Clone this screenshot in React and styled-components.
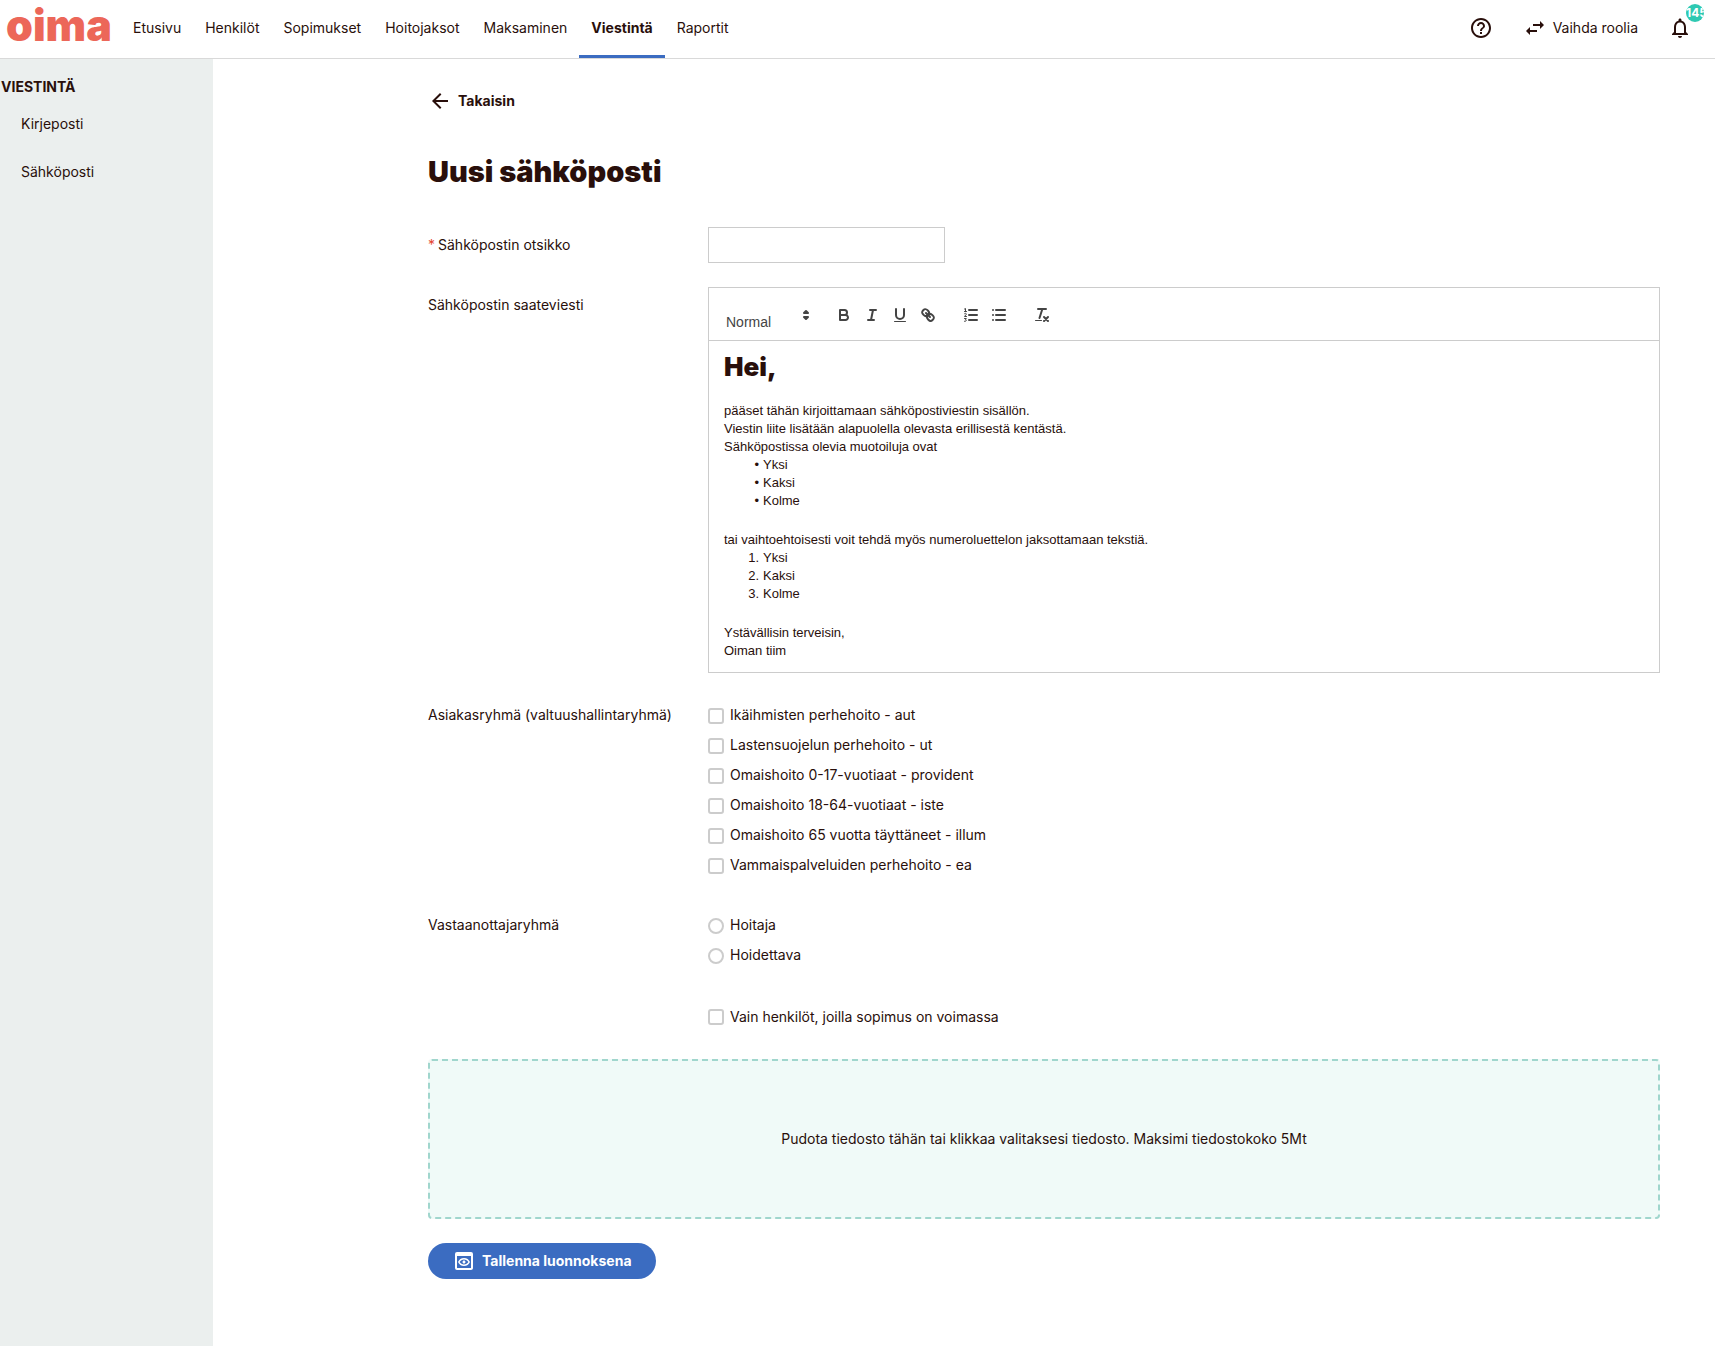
import { useState } from 'react'
import styled, { createGlobalStyle, css } from 'styled-components'
import {
  MdArrowBack,
  MdHelpOutline,
  MdNotificationsNone,
  MdOutlinePreview,
  MdSwapHoriz,
} from 'react-icons/md'

const GlobalStyle = createGlobalStyle`
  *, *::before, *::after {
    box-sizing: border-box;
  }

  body {
    margin: 0;
    background: #fff;
    color: #290f0b;
    font-family: Inter, sans-serif;
    font-size: 14px;
    line-height: 20px;
  }

  button, input, select {
    font: inherit;
    color: inherit;
  }
`;

const Page = styled.div`
  display: flex;
  flex-direction: column;
  min-height: 100vh;
`;

const Header = styled.header`
  display: flex;
  align-items: stretch;
  height: 59px;
  padding: 0 23px 0 6px;
  border-bottom: 1px solid #d9d9d9;
`;

const Logo = styled.a`
  width: 115px;
  color: #ec6759;
  text-decoration: none;

  svg {
    display: block;
    overflow: visible;
  }
`;

const Nav = styled.nav`
  display: flex;
`;

const NavLink = styled.a`
  display: flex;
  align-items: center;
  padding: 0 12px;
  border-top: 1px solid transparent;
  border-bottom: 3px solid ${({ $active }) => ($active ? '#3b6cc1' : 'transparent')};
  color: inherit;
  font-weight: ${({ $active }) => ($active ? 700 : 400)};
  text-decoration: none;
`;

const Actions = styled.div`
  display: flex;
  align-items: center;
  gap: 30px;
  height: 56px;
  margin-left: auto;
`;

const PlainButton = styled.button`
  display: flex;
  align-items: center;
  gap: 6px;
  padding: 0;
  border: none;
  background: transparent;
  cursor: pointer;
  position: relative;

  svg {
    flex: none;
  }
`;

const Badge = styled.span`
  position: absolute;
  top: -12px;
  right: -12px;
  width: 18px;
  height: 18px;
  border-radius: 50%;
  background: #2ec9b2;
  color: #fff;
  font-size: 12px;
  font-weight: 700;
  line-height: 18px;
  text-align: left;
  overflow: hidden;
`;

const Body = styled.div`
  display: flex;
  flex: 1;
`;

const Sidebar = styled.aside`
  flex: none;
  width: 213px;
  padding-top: 18px;
  background: #ebefee;
`;

const SidebarTitle = styled.h2`
  margin: 0 0 3px;
  padding-left: 1px;
  font-size: 14px;
  font-weight: 700;
  line-height: 20px;
  text-transform: uppercase;
`;

const SidebarLink = styled.a`
  display: block;
  padding: 14px 21px;
  color: inherit;
  text-decoration: none;
`;

const Main = styled.main`
  flex: 1;
  min-width: 0;
  padding: 30px 55px 40px 215px;
`;

const BackButton = styled(PlainButton)`
  font-weight: 700;
`;

const Title = styled.h1`
  margin: 38px 0 34px;
  font-size: 29px;
  font-weight: 900;
  line-height: 42px;
`;

const Form = styled.form`
  display: flex;
  flex-direction: column;
  gap: 24px;
`;

const Row = styled.div`
  display: grid;
  grid-template-columns: 280px minmax(0, 1fr);
`;

const ContractRow = styled(Row)`
  padding-top: 2px;

  input {
    margin-top: 0;
  }
`;

const labelStyles = css`
  padding: 8px 0;
  line-height: 20px;
`;

const Label = styled.label`
  ${labelStyles}
`;

const LabelText = styled.div`
  ${labelStyles}
`;

const Required = styled.span`
  margin-right: 3px;
  color: #e5452f;
`;

const TextInput = styled.input`
  width: 237px;
  height: 36px;
  padding: 0 12px;
  border: 1px solid #ccc;
  outline: none;
`;

const Editor = styled.div`
  border: 1px solid #ccc;
`;

const Toolbar = styled.div`
  display: flex;
  align-items: center;
  height: 53px;
  padding: 2px 8px 0;
  border-bottom: 1px solid #ccc;
  color: #444;
  font-family: 'Liberation Sans', sans-serif;
`;

const ToolGroup = styled.div`
  display: flex;
  align-items: center;
  margin-right: 15px;
`;

const Picker = styled.label`
  display: flex;
  align-items: center;
  width: 98px;

  svg {
    flex: none;
    width: 18px;
    pointer-events: none;
  }
`;

const PickerSelect = styled.select`
  flex: 1;
  min-width: 0;
  height: 38px;
  padding: 14px 0 0 9px;
  border: none;
  outline: none;
  background: transparent;
  font-size: 14px;
  appearance: none;
`;

const ToolButton = styled.button`
  width: 28px;
  height: 24px;
  padding: 3px 5px;
  border: none;
  background: none;
  cursor: pointer;

  svg {
    display: block;
    width: 18px;
    height: 18px;
  }
`;

const EditorContent = styled.div`
  padding: 8px 15px 12px;
  font-family: 'Liberation Sans', sans-serif;
  font-size: 13px;
  line-height: 18px;
  outline: none;

  h2 {
    margin: 0 0 17px;
    font-family: Inter, sans-serif;
    font-size: 26px;
    font-weight: 900;
    line-height: 36px;
  }

  p {
    margin: 0;
  }

  ul, ol {
    margin: 0 0 21px;
    padding: 0;
    list-style: none;
    counter-reset: item;
  }

  li {
    counter-increment: item;
  }

  li::before {
    display: inline-block;
    width: 35px;
    margin-right: 4px;
    text-align: right;
    content: '•';
  }

  ol li::before {
    content: counter(item) '.';
  }
`;

const Options = styled.div`
  display: flex;
  flex-direction: column;
  gap: 10px;
  padding: 8px 0;
`;

const Option = styled.label`
  display: flex;
  align-items: center;
  gap: 6px;
  line-height: 20px;
  cursor: pointer;
`;

const Check = styled.input`
  flex: none;
  width: 16px;
  height: 16px;
  margin: 2px 0 0;
  border: 2px solid #ccc;
  border-radius: ${({ type }) => (type === 'radio' ? '50%' : '3px')};
  background: #fff;
  appearance: none;

  &:checked {
    background: #3b6cc1;
    box-shadow: inset 0 0 0 2px #fff;
  }
`;

const DropZone = styled.label`
  display: flex;
  align-items: center;
  justify-content: center;
  height: 160px;
  border: 2px dashed #a0d6cd;
  border-radius: 4px;
  background: #f0faf8;
  cursor: pointer;
`;

const FileInput = styled.input`
  position: absolute;
  width: 1px;
  height: 1px;
  opacity: 0;
`;

const SaveButton = styled.button`
  display: flex;
  align-items: center;
  align-self: flex-start;
  gap: 6px;
  height: 36px;
  padding: 0 24px;
  border: none;
  border-radius: 18px;
  background: #3b6cc1;
  color: #fff;
  font-weight: 700;
  cursor: pointer;
`;

const ToolIcon = ({ children }) => (
  <svg viewBox='0 0 18 18' fill='none' stroke='#444' strokeWidth='2' strokeLinecap='round' strokeLinejoin='round'>
    {children}
  </svg>
)

const textTools = [
  {
    name: 'Lihavointi',
    icon: <>
      <path d='M5 4H9.5A2.5 2.5 0 0 1 12 6.5A2.5 2.5 0 0 1 9.5 9H5Z' />
      <path d='M5 9H10.5A2.5 2.5 0 0 1 13 11.5A2.5 2.5 0 0 1 10.5 14H5Z' />
    </>,
  },
  {
    name: 'Kursivointi',
    icon: <path d='M7 4H13M5 14H11M8 14L10 4' />,
  },
  {
    name: 'Alleviivaus',
    icon: <>
      <path d='M5 3V9A4 4 0 0 0 9 13A4 4 0 0 0 13 9V3' />
      <rect x='3' y='15' width='12' height='1' rx='0.5' fill='#444' stroke='none' />
    </>,
  },
  {
    name: 'Linkki',
    icon: <>
      <path d='M7 7L11 11' />
      <path d='M8.9 4.577a3.476 3.476 0 0 1 .36 4.679A3.476 3.476 0 0 1 4.577 8.9C3.185 7.5 2.035 6.4 4.217 4.217S7.5 3.185 8.9 4.577Z' />
      <path d='M13.423 9.1a3.476 3.476 0 0 0-4.679-.36 3.476 3.476 0 0 0 .36 4.679c1.392 1.392 2.5 2.542 4.679.36S14.815 10.5 13.423 9.1Z' />
    </>,
  },
]

const listTools = [
  {
    name: 'Numeroitu luettelo',
    icon: <>
      <path d='M7 4H15M7 9H15M7 14H15' />
      <path strokeWidth='1' d='M2.5 5.5H4.5M3.5 5.5V2.5L2.5 3M2.5 7.7C3.2 7 4.5 7.3 4.3 8.3L2.5 10.5H4.5M2.5 12.5H4.3L3.5 13.8C4.8 14 4.6 15.5 2.5 15.3' />
    </>,
  },
  {
    name: 'Luettelo',
    icon: <path d='M6 4H15M6 9H15M6 14H15M3 4H3M3 9H3M3 14H3' />,
  },
]

const clearTools = [
  {
    name: 'Poista muotoilu',
    icon: <>
      <path d='M5 3H13M6.5 12L9.35 3' />
      <path d='M11 11L15 15M15 11L11 15' />
      <rect x='2' y='14' width='7' height='1' rx='0.5' fill='#444' stroke='none' />
    </>,
  },
]

const Tools = ({ tools }) => (
  <ToolGroup>
    {tools.map(({ name, icon }) => (
      <ToolButton type='button' key={name} aria-label={name}>
        <ToolIcon>{icon}</ToolIcon>
      </ToolButton>
    ))}
  </ToolGroup>
)

const navItems = ['Etusivu', 'Henkilöt', 'Sopimukset', 'Hoitojaksot', 'Maksaminen', 'Viestintä', 'Raportit']

const customerGroups = [
  'Ikäihmisten perhehoito - aut',
  'Lastensuojelun perhehoito - ut',
  'Omaishoito 0-17-vuotiaat - provident',
  'Omaishoito 18-64-vuotiaat - iste',
  'Omaishoito 65 vuotta täyttäneet - illum',
  'Vammaispalveluiden perhehoito - ea',
]

const recipientGroups = ['Hoitaja', 'Hoidettava']

const TopBar = () => (
  <Header>
    <Logo href='#' aria-label='oima'>
      <svg width='106' height='56' viewBox='0 0 106 56'>
        <text x='0' y='41' fill='currentColor' fontFamily='Inter, sans-serif' fontSize='43' fontWeight='900'>oima</text>
      </svg>
    </Logo>
    <Nav>
      {navItems.map((item) => (
        <NavLink href='#' key={item} $active={item === 'Viestintä'}>{item}</NavLink>
      ))}
    </Nav>
    <Actions>
      <PlainButton aria-label='Ohje'><MdHelpOutline size={24} /></PlainButton>
      <PlainButton><MdSwapHoriz size={24} />Vaihda roolia</PlainButton>
      <PlainButton aria-label='Ilmoitukset'>
        <MdNotificationsNone size={24} />
        <Badge>145</Badge>
      </PlainButton>
    </Actions>
  </Header>
)

const MessageEditor = () => (
  <Editor>
    <Toolbar>
      <ToolGroup>
        <Picker>
          <PickerSelect aria-label='Tekstityyli' defaultValue='Normal'>
            <option>Normal</option>
          </PickerSelect>
          <svg viewBox='0 0 18 18' fill='#444' stroke='#444' strokeWidth='2' strokeLinejoin='round'>
            <path d='M7 11L9 13L11 11ZM7 7L9 5L11 7Z' />
          </svg>
        </Picker>
      </ToolGroup>
      <Tools tools={textTools} />
      <Tools tools={listTools} />
      <Tools tools={clearTools} />
    </Toolbar>
    <EditorContent
      contentEditable
      suppressContentEditableWarning
      spellCheck={false}
      role='textbox'
      aria-multiline='true'
      aria-labelledby='message-label'
    >
      <h2>Hei,</h2>
      <p>pääset tähän kirjoittamaan sähköpostiviestin sisällön.</p>
      <p>Viestin liite lisätään alapuolella olevasta erillisestä kentästä.</p>
      <p>Sähköpostissa olevia muotoiluja ovat</p>
      <ul>
        <li>Yksi</li>
        <li>Kaksi</li>
        <li>Kolme</li>
      </ul>
      <p>tai vaihtoehtoisesti voit tehdä myös numeroluettelon jaksottamaan tekstiä.</p>
      <ol>
        <li>Yksi</li>
        <li>Kaksi</li>
        <li>Kolme</li>
      </ol>
      <p>Ystävällisin terveisin,</p>
      <p>Oiman tiim</p>
    </EditorContent>
  </Editor>
)

export default function App() {
  const [subject, setSubject] = useState('');
  const [recipient, setRecipient] = useState('');

  return (
    <>
      <GlobalStyle />
      <Page>
        <TopBar />
        <Body>
          <Sidebar>
            <SidebarTitle>Viestintä</SidebarTitle>
            <SidebarLink href='#'>Kirjeposti</SidebarLink>
            <SidebarLink href='#'>Sähköposti</SidebarLink>
          </Sidebar>
          <Main>
            <BackButton type='button'><MdArrowBack size={24} />Takaisin</BackButton>
            <Title>Uusi sähköposti</Title>
            <Form onSubmit={(e) => e.preventDefault()}>
              <Row>
                <Label htmlFor='subject'><Required>*</Required>Sähköpostin otsikko</Label>
                <TextInput id='subject' value={subject} onChange={(e) => setSubject(e.target.value)} />
              </Row>
              <Row>
                <LabelText id='message-label'>Sähköpostin saateviesti</LabelText>
                <MessageEditor />
              </Row>
              <Row role='group' aria-labelledby='customer-label'>
                <LabelText id='customer-label'>Asiakasryhmä (valtuushallintaryhmä)</LabelText>
                <Options>
                  {customerGroups.map((group) => (
                    <Option key={group}><Check type='checkbox' />{group}</Option>
                  ))}
                </Options>
              </Row>
              <Row role='radiogroup' aria-labelledby='recipient-label'>
                <LabelText id='recipient-label'>Vastaanottajaryhmä</LabelText>
                <Options>
                  {recipientGroups.map((group) => (
                    <Option key={group}>
                      <Check
                        type='radio'
                        name='recipient'
                        checked={recipient === group}
                        onChange={() => setRecipient(group)}
                      />
                      {group}
                    </Option>
                  ))}
                </Options>
              </Row>
              <ContractRow>
                <div />
                <Options>
                  <Option><Check type='checkbox' />Vain henkilöt, joilla sopimus on voimassa</Option>
                </Options>
              </ContractRow>
              <DropZone>
                <FileInput type='file' />
                Pudota tiedosto tähän tai klikkaa valitaksesi tiedosto. Maksimi tiedostokoko 5Mt
              </DropZone>
              <SaveButton type='submit'><MdOutlinePreview size={24} />Tallenna luonnoksena</SaveButton>
            </Form>
          </Main>
        </Body>
      </Page>
    </>
  )
}
